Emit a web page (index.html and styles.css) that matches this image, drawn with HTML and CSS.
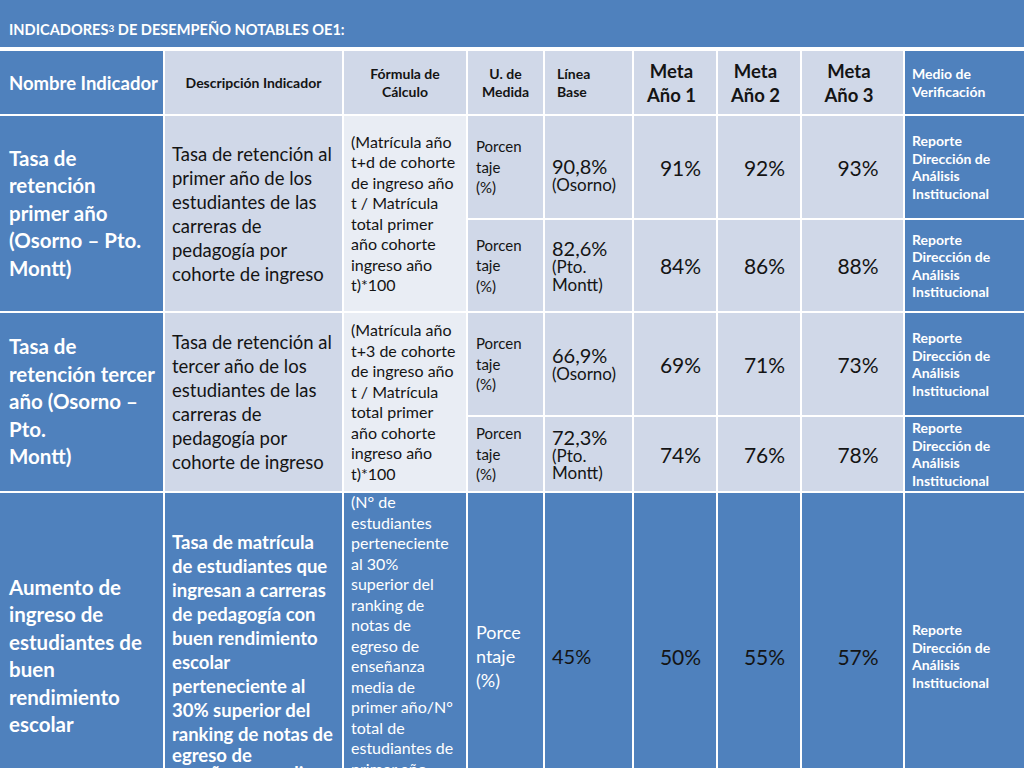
FILE: index.html
```html
<!DOCTYPE html>
<html lang="es">
<head>
<meta charset="utf-8">
<title>Indicadores de desempeño notables OE1</title>
<link rel="stylesheet" href="styles.css">
</head>
<body>
<div class="slide">
  <div class="title">INDICADORES<sup>3</sup>&nbsp;DE DESEMPEÑO NOTABLES OE1:</div>
  <div class="grid">
    <!-- header -->
    <div class="c blue h-name">Nombre Indicador</div>
    <div class="c light h-small center">Descripción Indicador</div>
    <div class="c light h-small center">Fórmula de<br>Cálculo</div>
    <div class="c light h-small center">U. de<br>Medida</div>
    <div class="c light h-small pad-base">Línea<br>Base</div>
    <div class="c light h-meta">Meta<br>Año 1</div>
    <div class="c light h-meta">Meta<br>Año 2</div>
    <div class="c light h-meta">Meta<br>Año 3</div>
    <div class="c blue h-small white">Medio de<br>Verificación</div>

    <!-- indicator 1 -->
    <div class="c blue name span2">Tasa de<br>retención<br>primer año<br>(Osorno – Pto.<br>Montt)</div>
    <div class="c light desc span2">Tasa de retención al<br>primer año de los<br>estudiantes de las<br>carreras de<br>pedagogía por<br>cohorte de ingreso</div>
    <div class="c pale formula span2">(Matrícula año<br>t+d de cohorte<br>de ingreso año<br>t / Matrícula<br>total primer<br>año cohorte<br>ingreso año<br>t)*100</div>
    <div class="c light unit">Porcen<br>taje<br>(%)</div>
    <div class="c light base base-first"><span class="big">90,8%</span><span class="small">(Osorno)</span></div>
    <div class="c light num">91%</div>
    <div class="c light num">92%</div>
    <div class="c light num">93%</div>
    <div class="c blue report">Reporte<br>Dirección de<br>Análisis<br>Institucional</div>

    <div class="c light unit">Porcen<br>taje<br>(%)</div>
    <div class="c light base"><span class="big">82,6%</span><span class="small">(Pto.<br>Montt)</span></div>
    <div class="c light num">84%</div>
    <div class="c light num">86%</div>
    <div class="c light num">88%</div>
    <div class="c blue report">Reporte<br>Dirección de<br>Análisis<br>Institucional</div>

    <!-- indicator 2 -->
    <div class="c blue name span2">Tasa de<br>retención tercer<br>año (Osorno –<br>Pto.<br>Montt)</div>
    <div class="c light desc span2">Tasa de retención al<br>tercer año de los<br>estudiantes de las<br>carreras de<br>pedagogía por<br>cohorte de ingreso</div>
    <div class="c pale formula span2">(Matrícula año<br>t+3 de cohorte<br>de ingreso año<br>t / Matrícula<br>total primer<br>año cohorte<br>ingreso año<br>t)*100</div>
    <div class="c light unit">Porcen<br>taje<br>(%)</div>
    <div class="c light base"><span class="big">66,9%</span><span class="small">(Osorno)</span></div>
    <div class="c light num">69%</div>
    <div class="c light num">71%</div>
    <div class="c light num">73%</div>
    <div class="c blue report">Reporte<br>Dirección de<br>Análisis<br>Institucional</div>

    <div class="c light unit">Porcen<br>taje<br>(%)</div>
    <div class="c light base"><span class="big">72,3%</span><span class="small">(Pto.<br>Montt)</span></div>
    <div class="c light num">74%</div>
    <div class="c light num">76%</div>
    <div class="c light num">78%</div>
    <div class="c blue report">Reporte<br>Dirección de<br>Análisis<br>Institucional</div>

    <!-- indicator 3 -->
    <div class="c blue name">Aumento de<br>ingreso de<br>estudiantes de<br>buen<br>rendimiento<br>escolar</div>
    <div class="c blue desc-bold"><span class="p1">Tasa de matrícula<br>de estudiantes que<br>ingresan a carreras<br>de pedagogía con<br>buen rendimiento<br>escolar<br>perteneciente al<br>30% superior del<br>ranking de notas de</span><span class="p2">egreso de<br>enseñanza media</span></div>
    <div class="c blue formula white">(N° de<br>estudiantes<br>perteneciente<br>al 30%<br>superior del<br>ranking de<br>notas de<br>egreso de<br>enseñanza<br>media de<br>primer año/N°<br>total de<br>estudiantes de<br>primer año<br>de pedagogía<br>)*100</div>
    <div class="c blue unit-big white">Porce<br>ntaje<br>(%)</div>
    <div class="c blue base"><span class="big">45%</span></div>
    <div class="c blue num">50%</div>
    <div class="c blue num">55%</div>
    <div class="c blue num">57%</div>
    <div class="c blue report">Reporte<br>Dirección de<br>Análisis<br>Institucional</div>
  </div>
</div>
</body>
</html>
```

FILE: styles.css
```css
html, body {
  margin: 0;
  padding: 0;
  background: #ffffff;
}

body {
  font-family: Lato, "Liberation Sans", sans-serif;
  color: #141414;
}

.slide {
  width: 1024px;
  height: 768px;
  overflow: hidden;
  background: #ffffff;
}

.title {
  height: 47px;
  box-sizing: border-box;
  background: #4f81bd;
  color: #ffffff;
  font-weight: 700;
  font-size: 14.6px;
  padding: 11px 0 0 9px;
  display: flex;
  align-items: center;
  margin-bottom: 4px;
  white-space: nowrap;
}

.title sup {
  font-size: 10px;
  line-height: 0;
  position: relative;
  top: -1px;
}

.grid {
  display: grid;
  grid-template-columns: 163px 177px 122px 75px 87px 82px 82px 101px 119px;
  grid-template-rows: 63px 102px 91px 102px 74px 326px;
  gap: 2px;
  background: #ffffff;
}

.c {
  display: flex;
  flex-direction: column;
  justify-content: center;
  padding: 0 7px;
  white-space: nowrap;
  min-width: 0;
  min-height: 0;
}

.span2 {
  grid-row: span 2;
}

.blue {
  background: #4f81bd;
}

.light {
  background: #d0d8e8;
}

.pale {
  background: #e9edf4;
}

.white {
  color: #ffffff;
}

/* header */
.h-name {
  color: #ffffff;
  font-weight: 700;
  font-size: 18.5px;
  padding-left: 9px;
}

.h-small {
  font-weight: 700;
  font-size: 14px;
  line-height: 18px;
}

.center {
  text-align: center;
}

.pad-base {
  padding-left: 12px;
}

.h-meta {
  font-weight: 700;
  font-size: 18.5px;
  line-height: 24px;
  text-align: center;
  padding-right: 14px;
}

/* body */
.name {
  color: #ffffff;
  font-weight: 700;
  font-size: 20.5px;
  line-height: 27.5px;
  padding-left: 9px;
}

.desc {
  font-size: 18.5px;
  line-height: 24px;
}

.desc-bold {
  color: #ffffff;
  font-weight: 700;
  font-size: 18.5px;
  line-height: 24px;
}

.desc-bold span {
  display: block;
}

.desc-bold .p2 {
  line-height: 18px;
}

.formula {
  font-size: 16px;
  line-height: 20.5px;
}

.unit {
  font-size: 15px;
  line-height: 20.5px;
  padding-left: 8px;
}

.unit-big {
  font-size: 18px;
  line-height: 24px;
  padding-left: 8px;
}

.base {
  padding-left: 7px;
}

.base-first {
  padding-top: 16px;
}

.base .big {
  display: block;
  font-size: 20px;
  line-height: 20px;
}

.base .small {
  display: block;
  font-size: 17px;
  line-height: 17.5px;
}

.num {
  font-size: 21px;
  text-align: center;
  padding-left: 11px;
  padding-right: 0;
}

.report {
  color: #ffffff;
  font-weight: 700;
  font-size: 14px;
  line-height: 17.5px;
}
```
